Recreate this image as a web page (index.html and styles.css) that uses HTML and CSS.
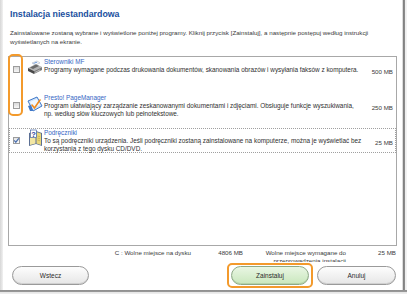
FILE: index.html
```html
<!DOCTYPE html>
<html lang="pl">
<head>
    <meta charset="UTF-8">
    <meta name="viewport" content="width=device-width, initial-scale=1.0">
    <title>Instalacja niestandardowa</title>
    <link rel="stylesheet" href="styles.css">
</head>
<body>

    <div class="window">
        <div class="frame">
            <div class="edge-left"></div>

            <div class="main">
                <h1 class="title">Instalacja niestandardowa</h1>
                <p class="intro">Zainstalowane zostaną wybrane i wyświetlone poniżej programy. Kliknij przycisk [Zainstaluj], a następnie postępuj według instrukcji<br>wyświetlanych na ekranie.</p>

                <div class="list">
                    <div class="item">
                        <span class="check"></span>
                        <svg class="icon" viewBox="0 0 16 16">
                            <polygon points="5,3 10,1 13,3 8,5" fill="#ffffff" stroke="#9aa7b8" stroke-width="0.5"/>
                            <polygon points="6,3.2 9.5,1.8 10.5,2.4 7,3.8" fill="#6f9ad8"/>
                            <polygon points="1,8 9,4 15,7 7,11" fill="#b4b4b4"/>
                            <polygon points="3,7.5 9,4.6 12,6 6,9" fill="#6b6b6b"/>
                            <polygon points="1,8 7,11 7,14 1,11" fill="#4a4a4a"/>
                            <polygon points="7,11 15,7 15,10 7,14" fill="#7c7c7c"/>
                            <polygon points="8,12 13,9.5 13,10.3 8,12.8" fill="#d0d0d0"/>
                        </svg>
                        <div class="info">
                            <div class="name">Sterowniki MF</div>
                            <div class="desc">Programy wymagane podczas drukowania dokumentów, skanowania obrazów i wysyłania faksów z komputera.</div>
                        </div>
                        <div class="size">500 MB</div>
                    </div>

                    <div class="item">
                        <span class="check"></span>
                        <svg class="icon" viewBox="0 0 16 16">
                            <polygon points="1,5 10,1 15,10 6,15" fill="#cfe3fa" stroke="#3f78c8" stroke-width="1"/>
                            <polygon points="3,6 10,3 13,9 6,12" fill="#eef6ff"/>
                            <polygon points="1,10 4,9 6,15 3,15" fill="#3f78c8"/>
                            <path d="M5 9 L7.5 12 L13 4" fill="none" stroke="#f08a1c" stroke-width="1.6" stroke-linecap="round"/>
                        </svg>
                        <div class="info">
                            <div class="name">Presto! PageManager</div>
                            <div class="desc">Program ułatwiający zarządzanie zeskanowanymi dokumentami i zdjęciami. Obsługuje funkcje wyszukiwania,<br>np. według słów kluczowych lub pełnotekstowe.</div>
                        </div>
                        <div class="size">250 MB</div>
                    </div>

                    <div class="item item-focus">
                        <span class="check checked">
                            <svg viewBox="0 0 7 7"><path d="M1.2 3.4 L2.8 5.2 L5.8 1.4" fill="none" stroke="#4a6fae" stroke-width="1.2"/></svg>
                        </span>
                        <svg class="icon icon-book" viewBox="0 0 16 18">
                            <polygon points="2,4 9,2 15,4 15,17 9,15 2,17" fill="#5b6f94"/>
                            <polygon points="3,4.5 8.5,3 8.5,14.5 3,16" fill="#f3e7a3"/>
                            <polygon points="9.5,3 14,4.5 14,16 9.5,14.5" fill="#e9d77a"/>
                            <rect x="3.5" y="1" width="6" height="7.5" fill="#ffffff" stroke="#2a4f9a" stroke-width="0.6"/>
                            <text x="6.5" y="7.6" text-anchor="middle" font-family="Liberation Sans, Arial, sans-serif" font-weight="bold" font-size="7.5" fill="#1f3f96">?</text>
                            <line x1="10.5" y1="7" x2="13" y2="7.8" stroke="#b59a3a" stroke-width="0.5"/>
                            <line x1="10.5" y1="9" x2="13" y2="9.8" stroke="#b59a3a" stroke-width="0.5"/>
                            <line x1="10.5" y1="11" x2="13" y2="11.8" stroke="#b59a3a" stroke-width="0.5"/>
                        </svg>
                        <div class="info">
                            <div class="name">Podręczniki</div>
                            <div class="desc">To są podręczniki urządzenia. Jeśli podręczniki zostaną zainstalowane na komputerze, można je wyświetlać bez<br>korzystania z tego dysku CD/DVD.</div>
                        </div>
                        <div class="size">25 MB</div>
                    </div>

                    <span class="highlight-checks"></span>
                </div>

                <div class="info-row">
                    <div class="cell">C : Wolne miejsce na dysku</div>
                    <div class="cell">4806 MB</div>
                    <div class="cell">Wolne miejsce wymagane do<br>przeprowadzenia instalacji</div>
                    <div class="cell">25 MB</div>
                </div>

                <div class="buttons">
                    <button class="btn btn-back">Wstecz</button>
                    <span class="focus-ring">
                        <button class="btn btn-install">Zainstaluj</button>
                    </span>
                    <button class="btn btn-cancel">Anuluj</button>
                </div>
            </div>

            <div class="edge-right"></div>
        </div>
        <div class="edge-bottom"></div>
    </div>

</body>
</html>
```

FILE: styles.css
```css
body {
    margin: 0;
    padding: 0;
    background-color: #ffffff;
    font-family: "Liberation Sans", Arial, sans-serif;
    color: #333333;
    overflow: hidden;
}

.window {
    width: 407px;
    height: 294px;
    display: flex;
    flex-direction: column;
}

.frame {
    display: flex;
    height: 290px;
}

.edge-left {
    width: 3px;
    background: linear-gradient(to right, #d6d6d6, #f1f1f1);
}

.edge-right {
    width: 5px;
    background: linear-gradient(to right, #dcdcdc 0, #dcdcdc 1px, #7e7e7e 1px, #8e8e8e 3px, #ececec 3px, #f4f4f4 5px);
}

.edge-bottom {
    height: 4px;
    background: linear-gradient(to bottom, #8f8f8f 0, #9a9a9a 2px, #e4e4e4 2px, #f0f0f0 4px);
}

.main {
    flex: 1;
    display: flex;
    flex-direction: column;
    min-width: 0;
}

.title {
    margin: 9px 0 0 7px;
    height: 10px;
    line-height: 10px;
    font-size: 8.8px;
    font-weight: bold;
    color: #20509e;
}

.intro {
    margin: 9px 0 0 7px;
    font-size: 6.2px;
    line-height: 9px;
    color: #3a3a3a;
}

.list {
    position: relative;
    box-sizing: border-box;
    height: 190px;
    margin: 10px 5px 0 5px;
    border: 1px solid #a8a8a8;
    background-color: #ffffff;
}

.item {
    display: flex;
    box-sizing: border-box;
    height: 25px;
    margin-bottom: 10.5px;
    border: 1px dotted transparent;
}

.item-focus {
    border-color: #a0a0a0;
}

.check {
    flex: none;
    box-sizing: border-box;
    width: 7px;
    height: 7px;
    margin: 8px 0 0 3px;
    border: 1px solid #9c9c9c;
    background: linear-gradient(to bottom, #d9d9d9, #f7f7f7);
}

.check svg {
    display: block;
    width: 7px;
    height: 7px;
    margin: -1px 0 0 -1px;
}

.check.checked {
    background: linear-gradient(to bottom, #e4e4e4, #fbfbfb);
}

.icon {
    flex: none;
    width: 16px;
    height: 16px;
    margin: 2px 0 0 7px;
}

.icon-book {
    height: 18px;
    margin-top: 0;
}

.info {
    flex: 1;
    min-width: 0;
    margin-left: 1px;
    font-size: 6.4px;
    line-height: 8px;
}

.name {
    color: #3466c4;
}

.desc {
    color: #2f2f2f;
}

.size {
    flex: none;
    padding: 10px 2px 0 6px;
    font-size: 6.2px;
    line-height: 8px;
    color: #3a3a3a;
}

/* orange marker round the two empty checkboxes */
.highlight-checks {
    position: absolute;
    left: -1px;
    top: -3px;
    width: 11px;
    height: 58px;
    border: 2px solid #f39a2c;
    border-radius: 5px;
}

.info-row {
    display: grid;
    grid-template-columns: 188px 52px 103px 50px;
    height: 16px;
    overflow: hidden;
    box-sizing: border-box;
    padding-top: 3px;
    font-size: 6.2px;
    line-height: 8px;
    color: #3a3a3a;
}

.info-row .cell {
    text-align: right;
}

.buttons {
    display: flex;
    align-items: center;
    margin-top: 1px;
    height: 25px;
    padding-left: 9px;
}

.btn {
    box-sizing: border-box;
    width: 77px;
    height: 19px;
    padding: 0;
    border: 1px solid #9a9a9a;
    border-radius: 10px;
    background: linear-gradient(to bottom, #fdfdfd, #e6e6e6);
    box-shadow: inset 0 -1px 0 #d0d0d0;
    font-family: "Liberation Sans", Arial, sans-serif;
    font-size: 6.5px;
    color: #2a2a2a;
}

.focus-ring {
    display: flex;
    margin-left: auto;
    padding: 1px 2px;
    border: 2px solid #f39a2c;
    border-radius: 5px;
}

.btn-install {
    width: 78px;
    border-color: #8ea987;
    background: linear-gradient(to bottom, #e9f6e3, #c9e7bd);
    box-shadow: inset 0 -1px 0 #b4d3a8;
}

.btn-cancel {
    width: 79px;
    margin: 0 6px 0 4px;
}
```
